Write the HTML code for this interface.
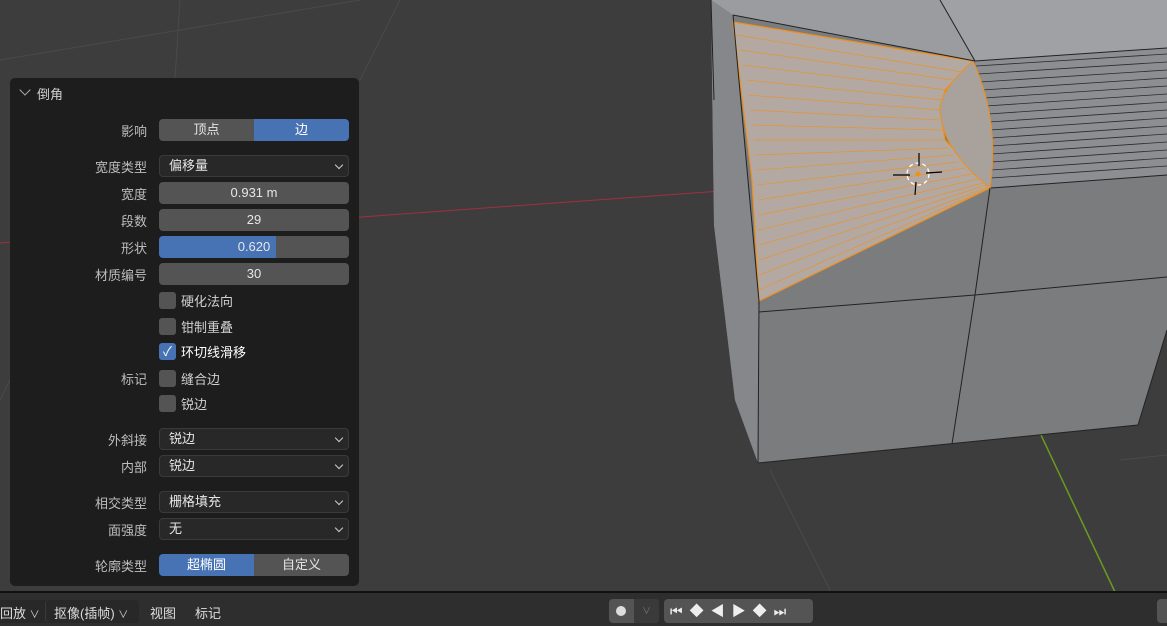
<!DOCTYPE html>
<html><head><meta charset="utf-8"><style>
body{margin:0;width:1167px;height:626px;overflow:hidden;background:#3d3d3d;font-family:"Liberation Sans","Noto Sans CJK SC",sans-serif;font-size:13px;color:#ddd;position:relative}
.a{position:absolute}
#panel{left:10px;top:78px;width:349px;height:508px;background:#1d1d1d;border-radius:5px}
.lbl{position:absolute;right:212px;color:#bdbdbd;text-align:right;white-space:nowrap}
.btn{position:absolute;left:149px;width:190px;height:22px;background:#545454;border-radius:4px;text-align:center;line-height:22px;color:#e6e6e6}
.dd{background:#282828;border:1px solid #3a3a3a;box-sizing:border-box;text-align:left;padding-left:9px;line-height:20px}
.dd:after{content:"";position:absolute;right:6px;top:6px;width:5px;height:5px;border-right:1.5px solid #ccc;border-bottom:1.5px solid #ccc;transform:rotate(45deg)}
.cb{position:absolute;left:149px;width:17px;height:17px;background:#545454;border-radius:3px}
.cbt{position:absolute;left:171px;color:#d0d0d0}
</style></head><body>
<svg class="a" style="left:0;top:0" width="1167" height="626">
<g stroke="#4a4a4a" stroke-width="1" fill="none">
<line x1="0" y1="60" x2="360" y2="0"/><line x1="400" y1="0" x2="360" y2="80"/><line x1="180" y1="0" x2="175" y2="78"/>
<line x1="830" y1="590" x2="770" y2="470"/><line x1="1120" y1="460" x2="1167" y2="455"/>
<line x1="10" y1="380" x2="0" y2="400"/>
</g>
<line x1="0" y1="243" x2="735" y2="190" stroke="#a03040" stroke-width="1"/>
<line x1="975" y1="295" x2="1115" y2="592" stroke="#6a9a20" stroke-width="1.5"/>
<polygon points="711,0 1167,0 1167,330 1138,425 758,463 735,400 714,225" fill="#7b7c7e"/>
<polygon points="711,0 940,0 975,61 733,15" fill="#9a9c9f"/>
<polygon points="940,0 1167,0 1167,48 975,61" fill="#9fa1a4"/>
<polygon points="711,0 733,15 759,312 758,463 735,400 714,225" fill="#85878a"/>
<polygon points="975,61 1167,48 1167,175 991,188" fill="#8c8e91"/>
<g stroke="#2a2a2a" stroke-width="0.8">
<line x1="976" y1="66" x2="1167" y2="54"/><line x1="978" y1="74" x2="1167" y2="62"/><line x1="980" y1="82" x2="1167" y2="70"/><line x1="982" y1="90" x2="1167" y2="78"/><line x1="984" y1="98" x2="1167" y2="86"/><line x1="986" y1="106" x2="1167" y2="94"/><line x1="988" y1="114" x2="1167" y2="102"/><line x1="989" y1="122" x2="1167" y2="110"/><line x1="990" y1="130" x2="1167" y2="118"/><line x1="991" y1="138" x2="1167" y2="126"/><line x1="991" y1="146" x2="1167" y2="134"/><line x1="991" y1="154" x2="1167" y2="142"/><line x1="991" y1="162" x2="1167" y2="150"/><line x1="991" y1="170" x2="1167" y2="158"/><line x1="991" y1="178" x2="1167" y2="166"/>
</g>
<polygon points="733,22 973,61 945,90 940,110 945,140 990,188 759,301 752,180" fill="#b3a9a2" stroke="#f0901a" stroke-width="1.2"/>
<path d="M973,61 Q940,90 940,110 Q942,150 990,188 Q1000,120 973,61Z" fill="#a9a19b" stroke="#f0901a" stroke-width="1"/>
<g stroke="#f0901a" stroke-width="0.7" opacity="0.85">
<line x1="737" y1="35" x2="962" y2="72"/><line x1="740" y1="50" x2="953" y2="80"/><line x1="743" y1="65" x2="947" y2="90"/><line x1="746" y1="80" x2="942" y2="100"/><line x1="748" y1="95" x2="940" y2="110"/><line x1="750" y1="110" x2="940" y2="120"/><line x1="752" y1="125" x2="942" y2="130"/><line x1="754" y1="140" x2="944" y2="140"/><line x1="755" y1="155" x2="948" y2="148"/><line x1="756" y1="170" x2="953" y2="155"/><line x1="757" y1="185" x2="958" y2="162"/><line x1="758" y1="200" x2="965" y2="168"/><line x1="758" y1="215" x2="972" y2="174"/><line x1="758" y1="230" x2="978" y2="179"/><line x1="759" y1="245" x2="983" y2="183"/><line x1="759" y1="260" x2="986" y2="185"/><line x1="759" y1="275" x2="988" y2="187"/><line x1="759" y1="290" x2="989" y2="188"/>
</g>
<g stroke="#222" stroke-width="1" fill="none">
<line x1="733" y1="15" x2="975" y2="61"/><line x1="940" y1="0" x2="975" y2="61"/><line x1="975" y1="61" x2="1167" y2="48"/>
<polyline points="990,188 975,295 952,444"/><line x1="991" y1="188" x2="1167" y2="175"/>
<polyline points="759,312 975,295 1167,277"/><line x1="759" y1="301" x2="758" y2="463"/>
<polyline points="758,463 1138,425 1167,330"/><line x1="711" y1="0" x2="714" y2="100"/><line x1="733" y1="15" x2="759" y2="301"/>
</g>
<circle cx="918" cy="174" r="11" fill="none" stroke="#fff" stroke-width="1.3" stroke-dasharray="4 3"/>
<g stroke="#000" stroke-width="1.2"><line x1="893" y1="175" x2="910" y2="175"/><line x1="926" y1="173" x2="942" y2="172"/><line x1="919" y1="153" x2="919" y2="166"/><line x1="916" y1="182" x2="915" y2="195"/></g>
<circle cx="918" cy="174" r="2.5" fill="#f0901a"/>
</svg>

<div class="a" id="panel">
<div class="a" style="left:11px;top:8px;width:7px;height:7px;border-right:1.5px solid #aaa;border-bottom:1.5px solid #aaa;transform:rotate(45deg)"></div>
<div class="a" style="left:27px;top:6px;color:#d0d0d0">倒角</div>
<div class="lbl" style="top:43px">影响</div>
<div class="btn" style="top:41px;border-radius:4px 0 0 4px;width:95px">顶点</div>
<div class="btn" style="top:41px;left:244px;width:95px;border-radius:0 4px 4px 0;background:#4772b3;color:#fff">边</div>
<div class="lbl" style="top:79px">宽度类型</div>
<div class="btn dd" style="top:77px">偏移量</div>
<div class="lbl" style="top:106px">宽度</div>
<div class="btn" style="top:104px">0.931 m</div>
<div class="lbl" style="top:133px">段数</div>
<div class="btn" style="top:131px">29</div>
<div class="lbl" style="top:160px">形状</div>
<div class="btn" style="top:158px;background:linear-gradient(90deg,#4772b3 0 117px,#545454 117px)">0.620</div>
<div class="lbl" style="top:187px">材质编号</div>
<div class="btn" style="top:185px">30</div>
<div class="cb" style="top:214px"></div><div class="cbt" style="top:213px">硬化法向</div>
<div class="cb" style="top:240px"></div><div class="cbt" style="top:239px">钳制重叠</div>
<div class="cb" style="top:265px;background:#4772b3;color:#fff;font-size:13px;text-align:center;line-height:17px">✓</div><div class="cbt" style="top:264px;color:#fff">环切线滑移</div>
<div class="lbl" style="top:291px">标记</div>
<div class="cb" style="top:292px"></div><div class="cbt" style="top:291px">缝合边</div>
<div class="cb" style="top:317px"></div><div class="cbt" style="top:316px">锐边</div>
<div class="lbl" style="top:352px">外斜接</div>
<div class="btn dd" style="top:350px">锐边</div>
<div class="lbl" style="top:379px">内部</div>
<div class="btn dd" style="top:377px">锐边</div>
<div class="lbl" style="top:415px">相交类型</div>
<div class="btn dd" style="top:413px">栅格填充</div>
<div class="lbl" style="top:442px">面强度</div>
<div class="btn dd" style="top:440px">无</div>
<div class="lbl" style="top:478px">轮廓类型</div>
<div class="btn" style="top:476px;width:95px;border-radius:4px 0 0 4px;background:#4772b3;color:#fff">超椭圆</div>
<div class="btn" style="top:476px;left:244px;width:95px;border-radius:0 4px 4px 0">自定义</div>
</div>

<div class="a" style="left:0;top:591px;width:1167px;height:2px;background:#111"></div>
<div class="a" style="left:0;top:593px;width:1167px;height:33px;background:#2e2e2e"></div>
<div class="a" style="left:0;top:600px;width:88px;height:23px;background:#282828;border-radius:0 4px 4px 0"></div>
<div class="a" style="left:0;top:603px;color:#ddd">回放 <span style="font-size:10px">∨</span></div>
<div class="a" style="left:45px;top:600px;width:93px;height:23px;background:#282828;border-radius:4px;border-left:1px solid #3a3a3a"></div>
<div class="a" style="left:54px;top:603px;color:#ddd">抠像(插帧) <span style="font-size:10px">∨</span></div>
<div class="a" style="left:150px;top:603px;color:#ddd">视图</div>
<div class="a" style="left:195px;top:603px;color:#ddd">标记</div>
<div class="a" style="left:609px;top:599px;width:50px;height:24px;background:#545454;border-radius:4px"></div>
<div class="a" style="left:634px;top:599px;width:25px;height:24px;background:#3a3a3a;border-radius:0 4px 4px 0;color:#777;text-align:center;line-height:24px;font-size:9px">∨</div>
<div class="a" style="left:616px;top:606px;width:10px;height:10px;border-radius:50%;background:#ddd"></div>
<div class="a" style="left:664px;top:599px;width:149px;height:24px;background:#545454;border-radius:4px;color:#eee;font-size:14px;line-height:24px;letter-spacing:7px;padding-left:6px;box-sizing:border-box;white-space:nowrap">⏮◆◀▶◆⏭</div>
<div class="a" style="left:1157px;top:599px;width:10px;height:24px;background:#545454;border-radius:4px 0 0 4px"></div>
</body></html>
